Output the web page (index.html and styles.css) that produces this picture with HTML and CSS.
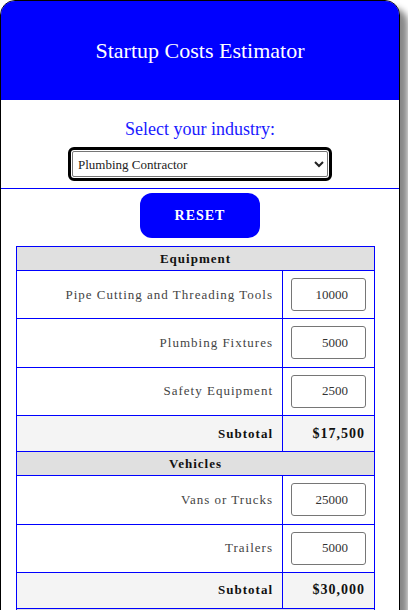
FILE: index.html
```html
<!DOCTYPE html>
<html lang="en">
<head>
<meta charset="utf-8">
<title>Startup Costs Estimator</title>
<link rel="stylesheet" href="styles.css">
</head>
<body>
<div class="app">
  <header class="app-header">
    <h1 class="app-title">Startup Costs Estimator</h1>
  </header>
  <section class="industry">
    <label class="industry-label" for="industry">Select your industry:</label>
    <select class="industry-select" id="industry">
      <option>Plumbing Contractor</option>
      <option>Electrical Contractor</option>
      <option>Landscaping</option>
    </select>
  </section>
  <div class="actions">
    <button class="reset-btn" type="button">RESET</button>
  </div>
  <table class="costs">
    <tbody>
      <tr class="cat-row"><th colspan="2">Equipment</th></tr>
      <tr class="item-row"><td class="item-label">Pipe Cutting and Threading Tools</td><td class="item-value"><input class="cost-input" type="text" value="10000"></td></tr>
      <tr class="item-row"><td class="item-label">Plumbing Fixtures</td><td class="item-value"><input class="cost-input" type="text" value="5000"></td></tr>
      <tr class="item-row"><td class="item-label">Safety Equipment</td><td class="item-value"><input class="cost-input" type="text" value="2500"></td></tr>
      <tr class="sub-row"><td class="sub-label">Subtotal</td><td class="sub-value">$17,500</td></tr>
      <tr class="cat-row"><th colspan="2">Vehicles</th></tr>
      <tr class="item-row"><td class="item-label">Vans or Trucks</td><td class="item-value"><input class="cost-input" type="text" value="25000"></td></tr>
      <tr class="item-row"><td class="item-label">Trailers</td><td class="item-value"><input class="cost-input" type="text" value="5000"></td></tr>
      <tr class="sub-row"><td class="sub-label">Subtotal</td><td class="sub-value">$30,000</td></tr>
      <tr class="cat-row"><th colspan="2">Licenses and Permits</th></tr>
      <tr class="item-row"><td class="item-label">Business License</td><td class="item-value"><input class="cost-input" type="text" value="500"></td></tr>
      <tr class="sub-row"><td class="sub-label">Subtotal</td><td class="sub-value">$500</td></tr>
    </tbody>
  </table>
</div>
</body>
</html>
```

FILE: styles.css
```css
html {
  scrollbar-width: none;
}
html::-webkit-scrollbar {
  display: none;
}
body {
  margin: 0;
  background: #fff;
  font-family: "Liberation Serif", "Times New Roman", serif;
}
.app {
  box-sizing: border-box;
  width: 400px;
  border: 1px solid #000;
  border-radius: 15px 15px 0 0;
  overflow: hidden;
  box-shadow: 8px 8px 6px #888;
  background: #fff;
  padding-bottom: 20px;
}
.app-header {
  height: 99px;
  background: #0000ff;
  display: flex;
  align-items: center;
  justify-content: center;
}
.app-title {
  margin: 0;
  color: #fff;
  font-weight: normal;
  font-size: 22px;
  letter-spacing: 0;
}
.industry {
  display: flex;
  flex-direction: column;
  align-items: center;
  padding: 17px 0 11px;
  border-bottom: 1px solid #0000ff;
}
.industry-label {
  color: #1a1aff;
  font-size: 18px;
  line-height: 24px;
  margin-bottom: 10px;
}
.industry-select {
  box-sizing: border-box;
  width: 256px;
  height: 26px;
  border: 1px solid #767676;
  border-radius: 2px;
  outline: 3px solid #000;
  outline-offset: 1px;
  background: #fff;
  color: #222;
  font-family: "Liberation Serif", "Times New Roman", serif;
  font-size: 13px;
  padding: 0 1px;
}
.actions {
  display: flex;
  justify-content: center;
  padding-top: 4px;
}
.reset-btn {
  width: 120px;
  height: 45px;
  border: none;
  border-radius: 12px;
  background: #0000ff;
  color: #fff;
  font-family: "Liberation Serif", "Times New Roman", serif;
  font-weight: bold;
  font-size: 14px;
  letter-spacing: 1px;
}
.costs {
  margin: 8px 0 0 15px;
  width: 359px;
  border-collapse: collapse;
  border: 1px solid #0000ff;
}
.costs th,
.costs td {
  border: 1px solid #0000ff;
}
.cat-row th {
  background: #e0e0e0;
  height: 23px;
  padding: 0;
  font-size: 13px;
  font-weight: bold;
  letter-spacing: 1px;
  color: #111;
  text-align: center;
}
.item-row td {
  vertical-align: middle;
}
.item-label {
  text-align: right;
  padding: 7px 9px 7.4px;
  color: #444;
  font-size: 13px;
  letter-spacing: 1px;
}
.item-value {
  width: 75px;
  padding: 7px 8px 7.4px;
}
.cost-input {
  box-sizing: border-box;
  display: block;
  width: 75px;
  height: 33px;
  border: 1px solid #767676;
  border-radius: 3px;
  padding: 0 17px 0 0;
  text-align: right;
  font-family: "Liberation Serif", "Times New Roman", serif;
  font-size: 13px;
  color: #333;
}
.sub-row td {
  background: #f4f4f4;
  height: 35px;
  padding: 0 9px;
  text-align: right;
  font-size: 13px;
  font-weight: bold;
  letter-spacing: 1px;
  color: #111;
}
.sub-row .sub-value {
  padding-right: 9px;
  font-size: 14px;
}
```
